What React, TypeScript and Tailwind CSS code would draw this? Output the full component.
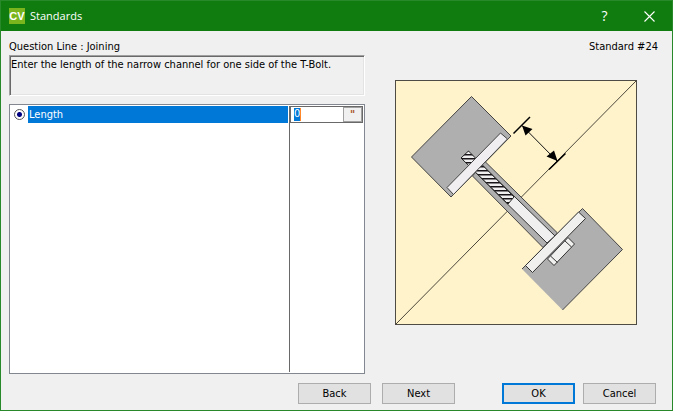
import { useState } from 'react';

const button =
  'box-border h-[21px] w-[73px] bg-[#e1e1e1] text-center text-black';

function Logo() {
  return (
    <span className="flex h-4 w-4 items-center justify-center bg-[#7ab51d] font-['Liberation_Sans',sans-serif] text-[11px] leading-4 font-bold text-white">
      CV
    </span>
  );
}

function TitleBar() {
  return (
    <header className="flex h-[30px] items-center bg-[#107c10] pl-2 font-['Open_Sans',sans-serif] text-[11px] text-white">
      <Logo />
      <h1 className="ml-[5px] grow">Standards</h1>
      <button type="button" aria-label="Help" className="flex h-full w-[45px] items-center justify-center text-sm">
        ?
      </button>
      <button type="button" aria-label="Close" className="flex h-full w-[45px] items-center justify-center">
        <svg width="11" height="11" viewBox="0 0 11 11" stroke="#fff" strokeWidth="1.1">
          <path d="M.5 .5l10 10M10.5 .5l-10 10" />
        </svg>
      </button>
    </header>
  );
}

function JointDiagram() {
  return (
    <svg
      role="img"
      aria-label="T-bolt joint with channel length marked"
      className="block h-auto w-full"
      viewBox="395 80 242 245"
      strokeWidth="1"
    >
      <defs>
        <pattern id="thread" x="0" y="2" width="4" height="4" patternUnits="userSpaceOnUse">
          <rect width="4" height="4" fill="#f0eff0" />
          <rect width="4" height="1.5" fill="#181418" />
        </pattern>
      </defs>
      <rect x="395.5" y="80.5" width="241" height="244" fill="#fff3cc" stroke="#4d4b44" />
      <path d="M396 324L637 80" stroke="#4b473b" fill="none" />
      <path d="M471.5 96.5L511 136L451 197L411.5 157Z" fill="#afafaf" stroke="#444" />
      <path d="M582.5 208.5L622.5 249.5L562.5 310L522 269Z" fill="#afafaf" />
      <path d="M522 269L582.5 208.5L622.5 249.5L562.5 310" fill="none" stroke="#444" />
      <path d="M485 161.500L557.500 233L543 247.500L472.500 176Z" fill="#afafaf" stroke="#444" />
      <path d="M480 163L555 236L547 243L473 170Z" fill="#f1f0f1" stroke="#333" />
      <path d="M468.500 151L514 197L508 204L461 158Z" fill="url(#thread)" stroke="#222" />
      <path d="M500.500 133L507.500 139L453.500 194.500L447 187.500Z" fill="#f0eef0" stroke="#444" />
      <path d="M547.500 259L554 265.500L574.500 244L568 237.500Z" fill="#f0f0ef" stroke="#333" />
      <path d="M550.500 256L557.500 262.500M564.500 240.500L571.500 247" stroke="#333" />
      <path d="M578.500 212L585.500 218.500L532.500 272.500L525.500 265.500Z" fill="#f0f0ee" stroke="#333" />
      <path d="M513.500 133.500L530 117M549 169.500L565.500 153.500" stroke="#000" strokeWidth="1.500" />
      <path d="M522 125.500L557 161" stroke="#111" />
      <path d="M522 125.500L525.500 135.500L532.500 129ZM557.500 161L546.500 156.500L554 150.500Z" fill="#000" />
    </svg>
  );
}

export default function App() {
  const [length, setLength] = useState('0');

  return (
    <main className="flex min-h-screen flex-col border border-[#27892a] bg-[#f0f0f0] font-['DejaVu_Sans_Condensed','DejaVu_Sans',sans-serif] text-[11px] text-black">
      <TitleBar />
      <div className="flex grow flex-col px-2 pt-2">
        <div className="flex h-4 items-center justify-between pr-[6px]">
          <h2>Question Line : Joining</h2>
          <span>Standard #24</span>
        </div>
        <div className="flex grow gap-[30px]">
          <section className="flex w-[356px] flex-none flex-col">
            <p className="h-[41px] border border-t-[#a0a0a0] border-l-[#a0a0a0] border-r-white border-b-white pl-px leading-[18px] shadow-[inset_1px_1px_0_#696969,inset_-1px_-1px_0_#e3e3e3]">
              Enter the length of the narrow channel for one side of the T-Bolt.
            </p>
            <div className="mt-2 flex grow border border-[#828790] bg-white p-px">
              <div className="grow pr-px">
                <label className="flex h-[17px] items-center">
                  <input
                    type="radio"
                    name="question"
                    defaultChecked
                    className="mx-[3px] h-[11px] w-[11px] appearance-none rounded-full border border-[#555] bg-white bg-[radial-gradient(circle,#000080_2px,transparent_3px)]"
                  />
                  <span className="h-full grow bg-[#0078d7] pl-px leading-[17px] text-white">Length</span>
                </label>
              </div>
              <div className="w-[74px] border-l border-[#696969]">
                <div className="flex h-[17px] items-stretch border border-[#696969]">
                  <div className="grow pt-px pl-[3px]">
                    <input
                      aria-label="Length"
                      value={length}
                      onChange={(e) => setLength(e.target.value)}
                      className="block h-[13px] w-[7px] border-r border-[#ff8728] bg-[#0078d7] text-white outline-none"
                    />
                  </div>
                  <button
                    type="button"
                    aria-label="Inches"
                    className="w-[19px] border border-[#a0a0a0] bg-[#f0f0f0] leading-[13px] font-bold text-[#a8501c]"
                  >
                    "
                  </button>
                </div>
              </div>
            </div>
          </section>
          <aside className="min-w-0 grow pt-[25px] pr-[27px]">
            <JointDiagram />
          </aside>
        </div>
        <footer className="flex items-center justify-end pt-[9px] pr-2 pb-[6px]">
          <button type="button" className={`${button} border border-[#adadad] leading-[19px]`}>
            Back
          </button>
          <button type="button" className={`${button} ml-[11px] border border-[#adadad] leading-[19px]`}>
            Next
          </button>
          <button type="button" className={`${button} ml-[47px] border-2 border-[#0078d7] leading-[17px]`}>
            OK
          </button>
          <button type="button" className={`${button} ml-2 border border-[#adadad] leading-[19px]`}>
            Cancel
          </button>
        </footer>
      </div>
    </main>
  );
}
